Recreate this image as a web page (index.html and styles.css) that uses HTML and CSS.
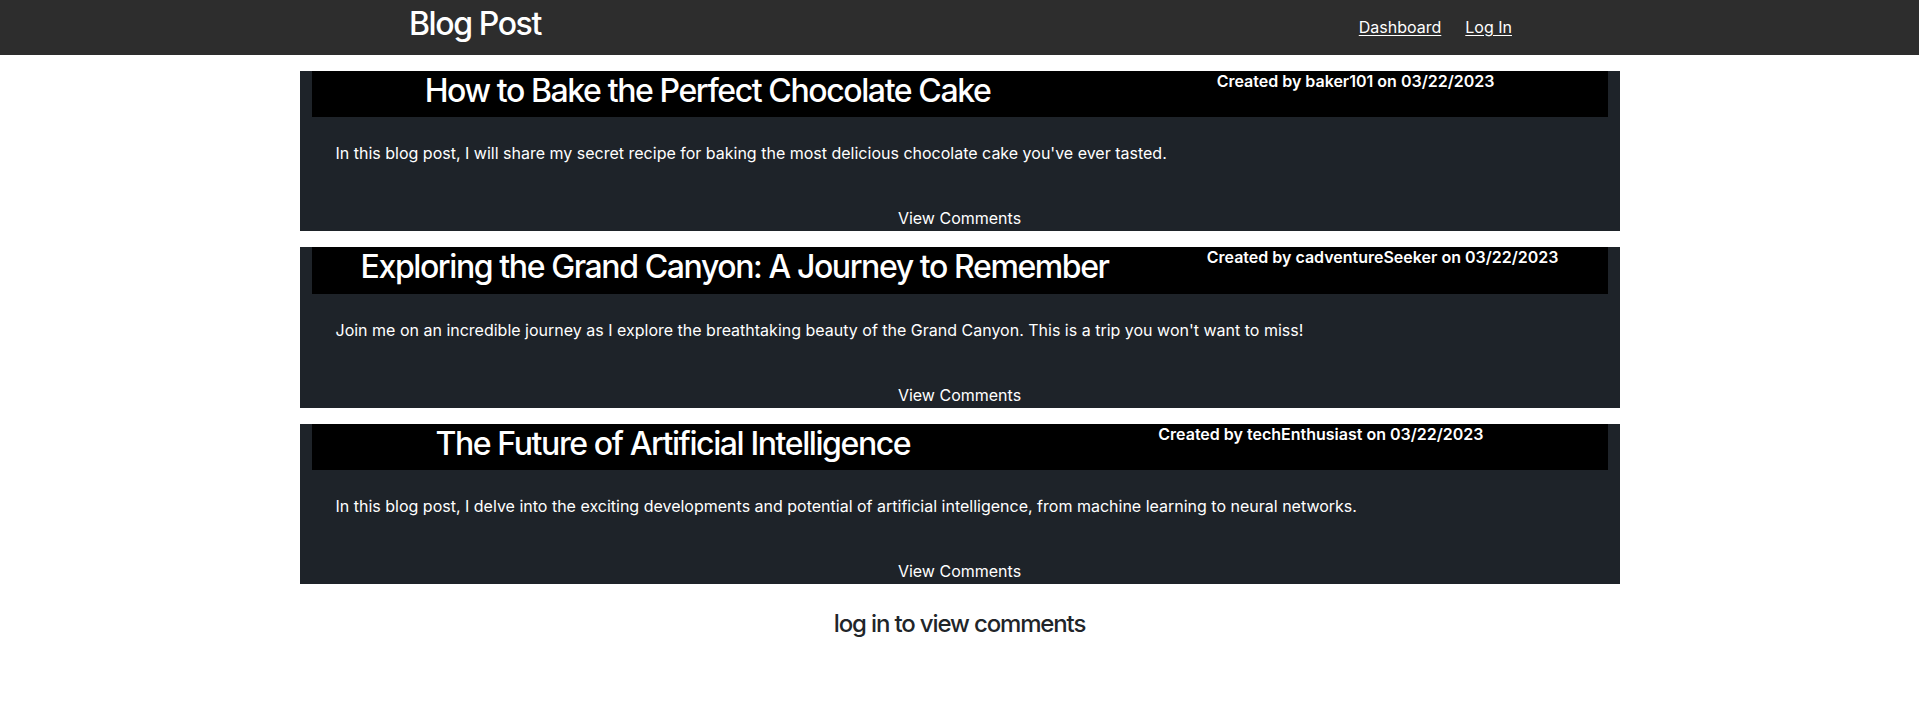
FILE: index.html
```html
<!DOCTYPE html>
<html lang="en">
<head>
<meta charset="utf-8">
<title>Blog Post</title>
<link rel="stylesheet" href="styles.css">
</head>
<body>
<header class="topbar">
  <div class="topbar-inner">
    <h1 class="brand">Blog Post</h1>
    <nav class="nav">
      <a href="#" class="nav-link">Dashboard</a>
      <a href="#" class="nav-link">Log In</a>
    </nav>
  </div>
</header>
<main class="posts">
  <article class="post">
    <div class="post-head">
      <h2 class="post-title">How to Bake the Perfect Chocolate Cake</h2>
      <h6 class="post-meta">Created by baker101 on 03/22/2023</h6>
    </div>
    <div class="post-body">
      <p class="post-text">In this blog post, I will share my secret recipe for baking the most delicious chocolate cake you've ever tasted.</p>
    </div>
    <div class="post-foot"><button class="view-btn">View Comments</button></div>
  </article>
  <article class="post">
    <div class="post-head">
      <h2 class="post-title">Exploring the Grand Canyon: A Journey to Remember</h2>
      <h6 class="post-meta">Created by cadventureSeeker on 03/22/2023</h6>
    </div>
    <div class="post-body">
      <p class="post-text">Join me on an incredible journey as I explore the breathtaking beauty of the Grand Canyon. This is a trip you won't want to miss!</p>
    </div>
    <div class="post-foot"><button class="view-btn">View Comments</button></div>
  </article>
  <article class="post">
    <div class="post-head">
      <h2 class="post-title">The Future of Artificial Intelligence</h2>
      <h6 class="post-meta">Created by techEnthusiast on 03/22/2023</h6>
    </div>
    <div class="post-body">
      <p class="post-text">In this blog post, I delve into the exciting developments and potential of artificial intelligence, from machine learning to neural networks.</p>
    </div>
    <div class="post-foot"><button class="view-btn">View Comments</button></div>
  </article>
  <h4 class="login-note">log in to view comments</h4>
</main>
</body>
</html>
```
FILE: styles.css
```css
* { box-sizing: border-box; }
body {
  margin: 0;
  font-family: Inter, "Noto Sans", "Liberation Sans", sans-serif;
  color: #212529;
  background: #fff;
}
.topbar {
  background: #2d2d2d;
  height: 55px;
}
.topbar-inner {
  display: flex;
  justify-content: space-between;
  align-items: flex-start;
  padding: 5px 407px 0 409px;
}
.brand {
  margin: 0;
  font-size: 32px;
  line-height: 38.4px;
  font-weight: 500;
  letter-spacing: -1.4px;
  color: #fff;
}
.nav {
  display: flex;
  gap: 24px;
  margin-top: 10px;
}
.nav-link {
  color: #fff;
  font-size: 16px;
  line-height: 24px;
  text-decoration: underline;
  text-underline-offset: 2px;
}
.posts {
  width: 1320px;
  margin: 16px auto 0;
  display: flex;
  flex-direction: column;
  gap: 16px;
}
.post {
  background: #1e2329;
  color: #fff;
  padding: 0 0 1px;
}
.post-head {
  background: #000;
  margin: 0 12px;
  display: flex;
  justify-content: space-around;
  align-items: flex-start;
}
.post-title {
  margin: 1px 0 7px;
  font-size: 32px;
  line-height: 38.4px;
  font-weight: 500;
  letter-spacing: -1.4px;
}
.post-meta {
  margin: 1px 0 0;
  font-size: 16px;
  line-height: 19.2px;
  font-weight: 600;
}
.post-body {
  padding: 24px 36px 0;
}
.post-text {
  margin: 0;
  font-size: 16px;
  line-height: 24px;
}
.post-foot {
  display: flex;
  justify-content: center;
  margin-top: 41px;
}
.view-btn {
  background: none;
  border: 0;
  padding: 0;
  color: #fff;
  font-family: inherit;
  font-size: 16px;
  line-height: 24px;
}
.login-note {
  margin: 10px 0 0;
  text-align: center;
  font-size: 24px;
  line-height: 28.8px;
  font-weight: 500;
  letter-spacing: -1.15px;
}
```
